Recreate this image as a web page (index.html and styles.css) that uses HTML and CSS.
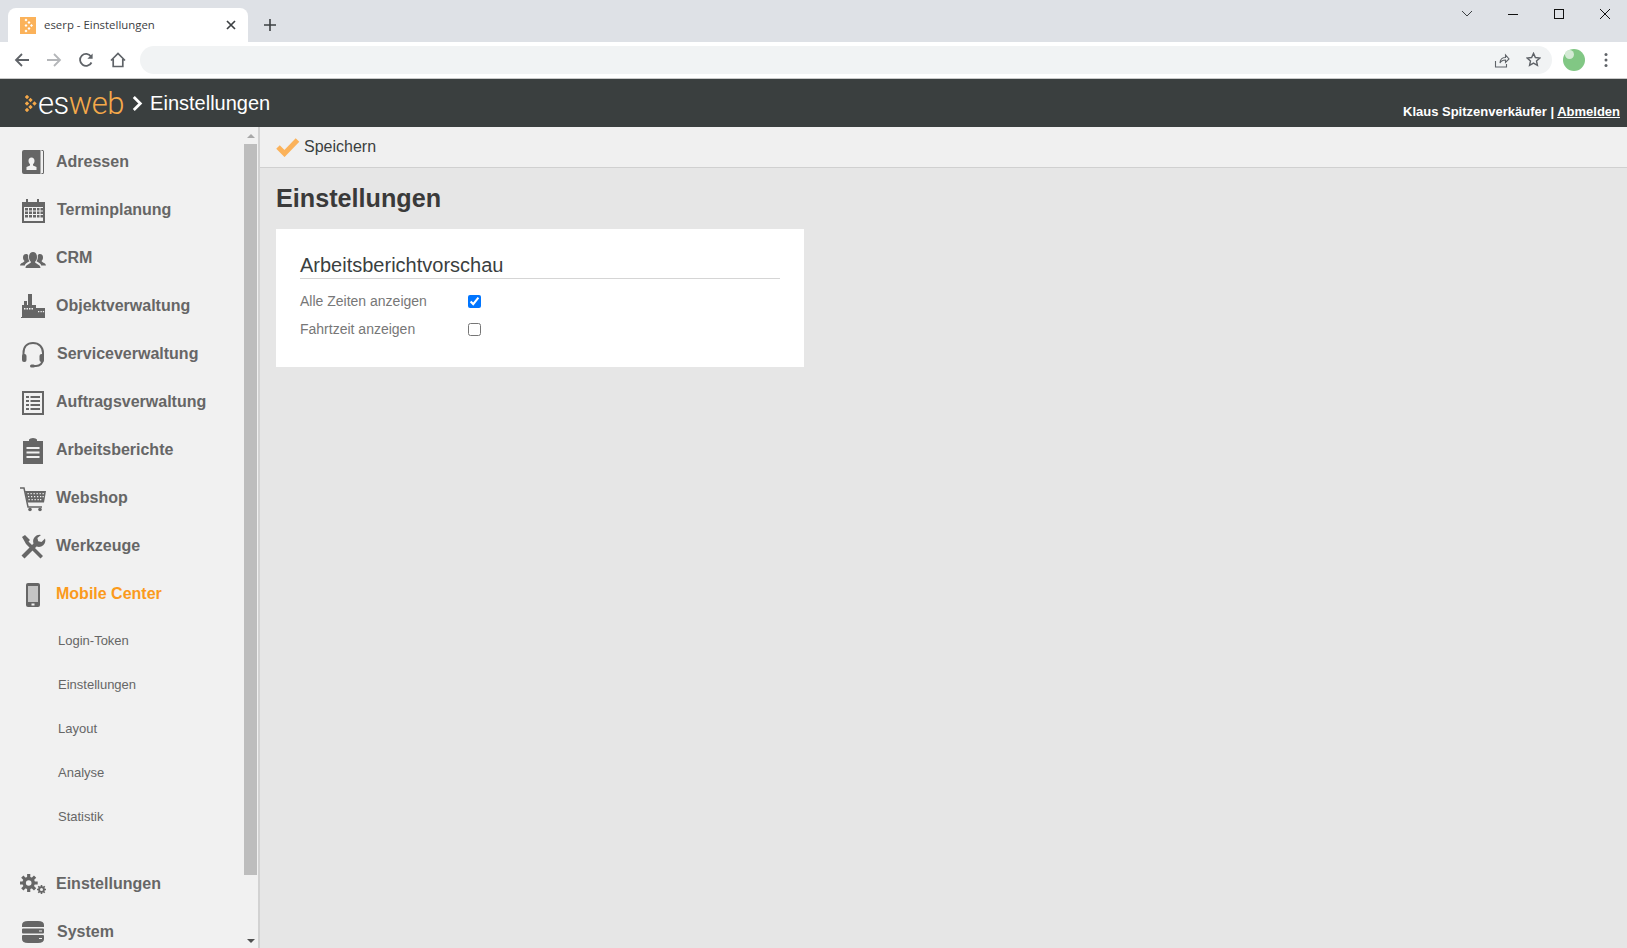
FILE: index.html
```html
<!DOCTYPE html>
<html lang="de">
<head>
<meta charset="utf-8">
<title>eserp - Einstellungen</title>
<link rel="stylesheet" href="styles.css">
</head>
<body>
<div class="browser">
  <div class="tabstrip">
    <div class="tab">
      <svg class="favicon" viewBox="0 0 16 17" width="16" height="17"><rect width="16" height="17" fill="#fbb25a"/><path d="M6 1.500L7.500 3 6 4.500 4.500 3zM9 4L10.500 5.500 9 7 7.500 5.500zM11.500 7L13 8.500 11.500 10 10 8.500zM9 10L10.500 11.500 9 13 7.500 11.500zM6 12.500L7.500 14 6 15.500 4.500 14zM6 7L7.500 8.500 6 10 4.500 8.500z" fill="#fff"/></svg>
      <span class="tab-title">eserp - Einstellungen</span>
      <svg class="tab-close" viewBox="0 0 10 10" width="10" height="10"><path d="M1 1l8 8M9 1l-8 8" stroke="#3c4043" stroke-width="1.700" fill="none"/></svg>
    </div>
    <svg class="newtab" viewBox="0 0 12 12" width="12" height="12"><path d="M6 0v12M0 6h12" stroke="#3c4043" stroke-width="1.600"/></svg>
    <div class="winctl">
      <svg viewBox="0 0 46 14" width="46" height="14"><path d="M18 4l5 5 5-5" stroke="#3c4043" fill="none"/></svg>
      <svg viewBox="0 0 46 14" width="46" height="14"><path d="M18 7.500h10" stroke="#111" fill="none"/></svg>
      <svg viewBox="0 0 46 14" width="46" height="14"><rect x="18.500" y="2.500" width="9" height="9" stroke="#111" fill="none"/></svg>
      <svg viewBox="0 0 46 14" width="46" height="14"><path d="M18 2l10 10M28 2L18 12" stroke="#111" fill="none"/></svg>
    </div>
  </div>
  <div class="toolbar">
    <svg class="nav-ic" viewBox="0 0 16 16" width="16" height="16"><path d="M15 8H2M8 2L2 8l6 6" stroke="#5f6368" stroke-width="1.800" fill="none"/></svg>
    <svg class="nav-ic" viewBox="0 0 16 16" width="16" height="16"><path d="M1 8h13M8 2l6 6-6 6" stroke="#b4b6b9" stroke-width="1.800" fill="none"/></svg>
    <svg class="nav-ic" viewBox="0 0 16 16" width="16" height="16"><path d="M13.500 10.500A6 6 0 1 1 13 4.500" stroke="#5f6368" stroke-width="1.800" fill="none"/><path d="M14.600 1.500v5.200H9.400z" fill="#5f6368"/></svg>
    <svg class="nav-ic" viewBox="0 0 16 16" width="16" height="16"><path d="M1 8.500L8 1.500l7 7M3.200 7v7.500h9.600V7" stroke="#5f6368" stroke-width="1.700" fill="none"/></svg>
    <div class="omnibox">
      <svg viewBox="0 0 16 16" width="16" height="16"><path d="M1.500 9v6h11v-3M6 11c0-4 3-5.500 5.500-5.500V3L15 7l-3.500 3.500V8C9 8 7 9 6 11z" stroke="#5f6368" stroke-width="1.100" fill="none"/></svg>
      <svg viewBox="0 0 16 16" width="15" height="15"><path d="M8 1.500l2 4.400 4.800.5-3.600 3.200 1 4.700L8 11.900l-4.200 2.400 1-4.700L1.200 6.400 6 5.900z" stroke="#5f6368" stroke-width="1.500" fill="none"/></svg>
    </div>
    <svg class="avatar" viewBox="0 0 22 22" width="22" height="22"><circle cx="11" cy="11" r="11" fill="#81c784"/><circle cx="6.500" cy="5.500" r="4.500" fill="#d4ead5"/></svg>
    <svg class="kebab" viewBox="0 0 4 16" width="4" height="16"><circle cx="2" cy="2.500" r="1.500" fill="#5f6368"/><circle cx="2" cy="8" r="1.500" fill="#5f6368"/><circle cx="2" cy="13.500" r="1.500" fill="#5f6368"/></svg>
  </div>
</div>

<header class="apphead">
  <div class="brand">
    <svg class="brand-mark" viewBox="0 0 12 17" width="12" height="17"><path d="M2 -.2L4.200 2 2 4.200 -.2 2zM5.500 2.800L7.700 5 5.500 7.200 3.300 5zM9.500 6.300L11.700 8.500 9.500 10.700 7.300 8.500zM5.500 9.800L7.700 12 5.500 14.200 3.300 12zM2 12.800L4.200 15 2 17.200 -.2 15zM2 6.300L4.200 8.500 2 10.700 -.2 8.500z" fill="#f5a94a"/></svg>
    <span class="logo"><span class="logo-es">es</span><span class="logo-web">web</span></span>
    <svg class="crumb" viewBox="0 0 11 15" width="11" height="15"><path d="M1.800 1l6.500 6.500-6.500 6.500" stroke="#fff" stroke-width="2.800" fill="none"/></svg>
    <span class="page-name">Einstellungen</span>
  </div>
  <div class="user">Klaus Spitzenverkäufer | <a href="#">Abmelden</a></div>
</header>

<div class="main">
  <aside class="sidebar">
    <nav class="nav">
      <a class="item" href="#">
        <svg class="ic" viewBox="0 0 28 28"><path d="M2 4Q2 2 4 2H20.500v24H4Q2 26 2 24z" fill="#666"/><path d="M21.500 2h1Q24 2 24 3.500v21q0 1.500-1.500 1.500h-1v-1H23V3h-1.500z" fill="#666"/><path d="M6.500 22v-3l3.500-1.500v-1.300c-1-.9-1.500-2-1.500-3.400 0-2 1.100-3.300 3-3.300s3 1.300 3 3.300c0 1.400-.5 2.500-1.500 3.400v1.300l3.500 1.500v3z" fill="#f1f1f1"/></svg>
        <span>Adressen</span>
      </a>
      <a class="item item-wide" href="#">
        <svg class="ic" viewBox="0 0 28 28"><path d="M2 6h4V3h2v3h9V3h2v3h6v21H2z" fill="#666"/><path d="M4 11h19v14H4z" fill="#f1f1f1"/><path d="M5 12h3v2.500H5zM9 12h3v2.500H9zM13 12h3v2.500h-3zM17 12h2.500v2.500H17zM20.500 12H23v2.500h-2.500zM5 15.500h3V18H5zM9 15.500h3V18H9zM13 15.500h3V18h-3zM17 15.500h2.500V18H17zM20.500 15.500H23V18h-2.500zM5 19h3v2.500H5zM9 19h3v2.500H9zM13 19h3v2.500h-3zM17 19h2.500v2.500H17zM20.500 19H23v2.500h-2.500z" fill="#666"/></svg>
        <span>Terminplanung</span>
      </a>
      <a class="item" href="#">
        <svg class="ic" viewBox="0 0 28 28"><path d="M0 21.500c0-2.500 4-3 4.500-4.500-1-1-1.500-2-1.500-3.500C3 11.500 4 10 6 10c1 0 1.800.5 2.200 1.200-.2 3 .3 4.800 1.300 6C7 18.500 5 19.700 4.800 21.500zM26 21.500c0-2.500-4-3-4.500-4.500 1-1 1.500-2 1.500-3.500 0-2-1-3.500-3-3.500-1 0-1.800.5-2.200 1.200.2 3-.3 4.800-1.300 6 2.500 1.300 4.500 2.500 4.700 4.300z" fill="#666"/><path d="M5.500 24c0-3.500 5-4 5.500-6-1.500-1.500-2-3-2-5 0-3 1.700-5 4-5s4 2 4 5c0 2-.5 3.500-2 5 .5 2 5.500 2.500 5.500 6z" fill="#666"/></svg>
        <span>CRM</span>
      </a>
      <a class="item" href="#">
        <svg class="ic" viewBox="0 0 28 28"><path d="M8 2h4v11H8zM4 9h3v4H4zM2 13h14v3h9v9H2zM1 25h24v1H1z" fill="#666"/><path d="M4 16h1.500v1.500H4zM6.500 16H8v1.500H6.500zM9 16h1.500v1.500H9zM11.500 16H13v1.500h-1.500zM18 19h1.300v1.300H18zM20.500 19h1.300v1.300h-1.300zM22.800 19h1.300v1.300h-1.300z" fill="#f1f1f1"/></svg>
        <span>Objektverwaltung</span>
      </a>
      <a class="item item-wide" href="#">
        <svg class="ic" viewBox="0 0 28 28"><path d="M3.500 20V13C3.500 7 7 3 13 3s10 4 10 10v6c0 4-3 7-7 7h-3" stroke="#666" stroke-width="2" fill="none"/><rect x="2" y="14" width="4.500" height="8" rx="2" fill="#666"/><rect x="19.500" y="14" width="4.500" height="8" rx="2" fill="#666"/><rect x="10" y="24.500" width="5" height="3" rx="1.500" fill="#666"/></svg>
        <span>Serviceverwaltung</span>
      </a>
      <a class="item" href="#">
        <svg class="ic" viewBox="0 0 28 28"><path d="M2 3h22v24H2z" fill="#666"/><path d="M4 5h18v20H4z" fill="#f1f1f1"/><path d="M6 8h3v2H6zM10.500 8H20v2h-9.500zM6 12h3v2H6zM10.500 12H20v2h-9.500zM6 16h3v2H6zM10.500 16H20v2h-9.500zM6 20h3v2H6zM10.500 20H20v2h-9.500z" fill="#666"/></svg>
        <span>Auftragsverwaltung</span>
      </a>
      <a class="item" href="#">
        <svg class="ic" viewBox="0 0 28 28"><path d="M3 5h6V3.500Q10 2 13 2t4 1.500V5h6v23H3z" fill="#666"/><path d="M6.500 11h13v2h-13zM6.500 15.500h13v2h-13zM6.500 20h13v2h-13z" fill="#f1f1f1"/></svg>
        <span>Arbeitsberichte</span>
      </a>
      <a class="item" href="#">
        <svg class="ic" viewBox="0 0 28 28"><path d="M0 4h4l4 19h14" stroke="#666" stroke-width="1.500" fill="none"/><path d="M5 7h21l-2 11.500H7.500z" fill="#666"/><path d="M7.500 9h1.300v1.200H7.500zM10.500 9h1.300v1.200h-1.300zM13.500 9h1.300v1.200h-1.300zM16.500 9h1.300v1.200h-1.300zM19.500 9h1.300v1.200h-1.300zM22.500 9h1.300v1.200h-1.300zM8 12h1.300v1.200H8zM11 12h1.300v1.200H11zM14 12h1.300v1.200H14zM17 12h1.300v1.200H17zM20 12h1.300v1.200H20zM22.500 12h1.300v1.200h-1.300zM8.500 15h1.300v1.200H8.500zM11.500 15h1.300v1.200h-1.300zM14.500 15h1.300v1.200h-1.300zM17.500 15h1.300v1.200h-1.300zM20 15h1.300v1.200H20z" fill="#f1f1f1"/><circle cx="10" cy="25.500" r="1.800" fill="#666"/><circle cx="20" cy="25.500" r="1.800" fill="#666"/></svg>
        <span>Webshop</span>
      </a>
      <a class="item" href="#">
        <svg class="ic" viewBox="0 0 28 28"><path d="M2 5L5 3l5 5-1.500 1.500L23 24l-2.500 2.500L6 12 3.500 7.500z" fill="#666"/><path d="M21 3a6.500 6.500 0 0 0-7.500 8.500L1.500 23.500l3 3L16.500 14.500a6.500 6.500 0 0 0 8.500-8l-3.500 3.500-3.300-.8-.8-3.300z" fill="#666"/></svg>
        <span>Werkzeuge</span>
      </a>
      <a class="item item-active" href="#">
        <svg class="ic" viewBox="0 0 28 28"><rect x="6" y="3" width="14" height="24" rx="2" fill="#666"/><rect x="8" y="6" width="10" height="16" fill="#c4c4c4"/><rect x="11.500" y="23.500" width="3" height="2" fill="#f1f1f1"/></svg>
        <span>Mobile Center</span>
      </a>
      <div class="subnav">
        <a class="sub" href="#">Login-Token</a>
        <a class="sub" href="#">Einstellungen</a>
        <a class="sub" href="#">Layout</a>
        <a class="sub" href="#">Analyse</a>
        <a class="sub" href="#">Statistik</a>
      </div>
      <a class="item" href="#">
        <svg class="ic" viewBox="0 0 28 28"><path d="M8.700 4v18M-.3 13h18M2.300 6.600l12.800 12.800M15.100 6.600L2.300 19.400" stroke="#666" stroke-width="3.200" fill="none"/><circle cx="8.700" cy="13" r="6.200" fill="#666"/><circle cx="8.700" cy="13" r="2.800" fill="#f1f1f1"/><path d="M21.500 15v9M17 19.500h9M18.300 16.300l6.400 6.400M24.700 16.300l-6.400 6.400" stroke="#666" stroke-width="1.600" fill="none"/><circle cx="21.500" cy="19.500" r="3.300" fill="#666"/><circle cx="21.500" cy="19.500" r="1.500" fill="#f1f1f1"/></svg>
        <span>Einstellungen</span>
      </a>
      <a class="item item-wide" href="#">
        <svg class="ic" viewBox="0 0 28 28"><path d="M2 9V7Q2 3 8 3h10q6 0 6 4v2zM3 10.500h20q1 0 1 1v3q0 1-1 1H3q-1 0-1-1v-3q0-1 1-1zM3 17h20q1 0 1 1v3q0 4-6 4H8q-6 0-6-4v-3q0-1 1-1z" fill="#666"/><path d="M19 12.500h3v1h-3zM19 20h3v1h-3z" fill="#f1f1f1"/></svg>
        <span>System</span>
      </a>
    </nav>
    <div class="scrollbar">
      <span class="arrow arrow-up"></span>
      <span class="thumb"></span>
      <span class="arrow arrow-down"></span>
    </div>
  </aside>
  <main class="content">
    <div class="actionbar">
      <svg viewBox="0 0 24 20" width="24" height="20"><path d="M2 10l6.500 6.500L21.500 3" stroke="#fbb25a" stroke-width="5" fill="none"/></svg>
      <span>Speichern</span>
    </div>
    <h1 class="title">Einstellungen</h1>
    <section class="card">
      <h2 class="card-title">Arbeitsberichtvorschau</h2>
      <label class="row"><span class="row-label">Alle Zeiten anzeigen</span><input type="checkbox" checked></label>
      <label class="row"><span class="row-label">Fahrtzeit anzeigen</span><input type="checkbox"></label>
    </section>
  </main>
</div>
</body>
</html>
```
FILE: styles.css
```css
* { box-sizing: border-box; }
html, body { margin: 0; height: 100%; overflow: hidden; }
body {
  display: flex;
  flex-direction: column;
  font-family: "Liberation Sans", Arial, sans-serif;
  background: #e6e6e6;
}
.tabstrip {
  height: 42px;
  background: #dee1e6;
  display: flex;
  align-items: flex-end;
  padding-left: 8px;
  position: relative;
}
.tab {
  width: 240px;
  height: 34px;
  background: #fff;
  border-radius: 8px 8px 0 0;
  display: flex;
  align-items: center;
  padding: 0 12px;
  gap: 8px;
}
.favicon { flex: none; }
.tab-title {
  flex: 1;
  font: 11.400px "Open Sans", sans-serif;
  color: #3c4043;
  white-space: nowrap;
  padding-bottom: 2px;
}
.newtab { margin: 0 0 11px 16px; }
.winctl {
  position: absolute;
  top: 7px;
  right: -1px;
  display: flex;
}
.toolbar {
  height: 37px;
  background: #fff;
  border-bottom: 1px solid #c8c8c8;
  display: flex;
  align-items: center;
  padding: 0 19px 1px 14px;
}
.nav-ic { margin-right: 16px; }
.omnibox {
  flex: 1;
  height: 28px;
  border-radius: 14px;
  background: #f1f3f4;
  margin: 0 11px 0 -2px;
  display: flex;
  justify-content: flex-end;
  align-items: center;
  gap: 16px;
  padding-right: 11px;
}
.avatar { margin-right: 19px; }
.apphead {
  height: 48px;
  background: #3a3f3f;
  display: flex;
  justify-content: space-between;
  align-items: flex-end;
  padding: 0 7px 7px 25px;
  flex: none;
}
.brand {
  display: flex;
  align-items: center;
  align-self: center;
  margin-bottom: -7px;
}
.brand-mark { margin-right: 1px; }
.logo { font: 300 31px Roboto, sans-serif; letter-spacing: -.45px; }
.logo-es { color: #fff; }
.logo-web { color: #f5a94a; }
.crumb { margin: 0 7px 0 8px; }
.page-name { font-size: 20px; color: #fff; }
.user { font-size: 13px; font-weight: 700; color: #fff; line-height: 16px; }
.user a { color: #fff; }
.main { flex: 1; min-height: 0; display: flex; }
.sidebar {
  width: 260px;
  flex: none;
  background: #f1f1f1;
  border-right: 2px solid #d2d2d2;
  display: flex;
  overflow: hidden;
}
.nav { flex: 1; padding-top: 11px; }
.item {
  height: 48px;
  display: flex;
  align-items: center;
  gap: 8px;
  padding-left: 20px;
  font-size: 16px;
  font-weight: 700;
  color: #666;
  text-decoration: none;
}
.item-wide { gap: 9px; }
.item-active { color: #fb9a1c; }
.ic { width: 28px; height: 28px; flex: none; }
.subnav { margin: 0 0 22px; }
.sub {
  display: flex;
  align-items: center;
  height: 44px;
  padding-left: 58px;
  font-size: 13px;
  color: #666;
  text-decoration: none;
}
.scrollbar {
  width: 13px;
  margin-right: 1px;
  display: flex;
  flex-direction: column;
  align-items: center;
  padding-top: 7px;
}
.thumb {
  width: 13px;
  height: 731px;
  background: #bdbdbd;
  margin: 6px 0 64px;
  flex: none;
}
.arrow {
  width: 0;
  height: 0;
  flex: none;
  border-left: 4px solid transparent;
  border-right: 4px solid transparent;
}
.arrow-up { border-bottom: 4px solid #a8a8a8; }
.arrow-down { border-top: 4px solid #505050; }
.content { flex: 1; min-width: 0; }
.actionbar {
  height: 41px;
  background: #f0f0f0;
  border-bottom: 1px solid #d0d0d0;
  display: flex;
  align-items: center;
  gap: 4px;
  padding-left: 16px;
  font-size: 16px;
  color: #3a3f3f;
}
.title {
  margin: 0;
  padding: 15px 0 0 16px;
  font-size: 25.200px;
  line-height: 30px;
  color: #3a3a3a;
}
.card {
  width: 528px;
  height: 138px;
  margin: 16px 0 0 16px;
  padding: 24px 24px 0;
  background: #fff;
}
.card-title {
  margin: 0 0 8px;
  height: 26px;
  font-size: 20px;
  line-height: 24px;
  font-weight: 400;
  color: #3a3f3f;
  border-bottom: 1px solid #d5d5d5;
}
.row {
  height: 28px;
  display: flex;
  align-items: center;
  font-size: 14px;
  color: #777;
}
.row-label { width: 168px; }
.row input { margin: 0; width: 13px; height: 13px; }
```
